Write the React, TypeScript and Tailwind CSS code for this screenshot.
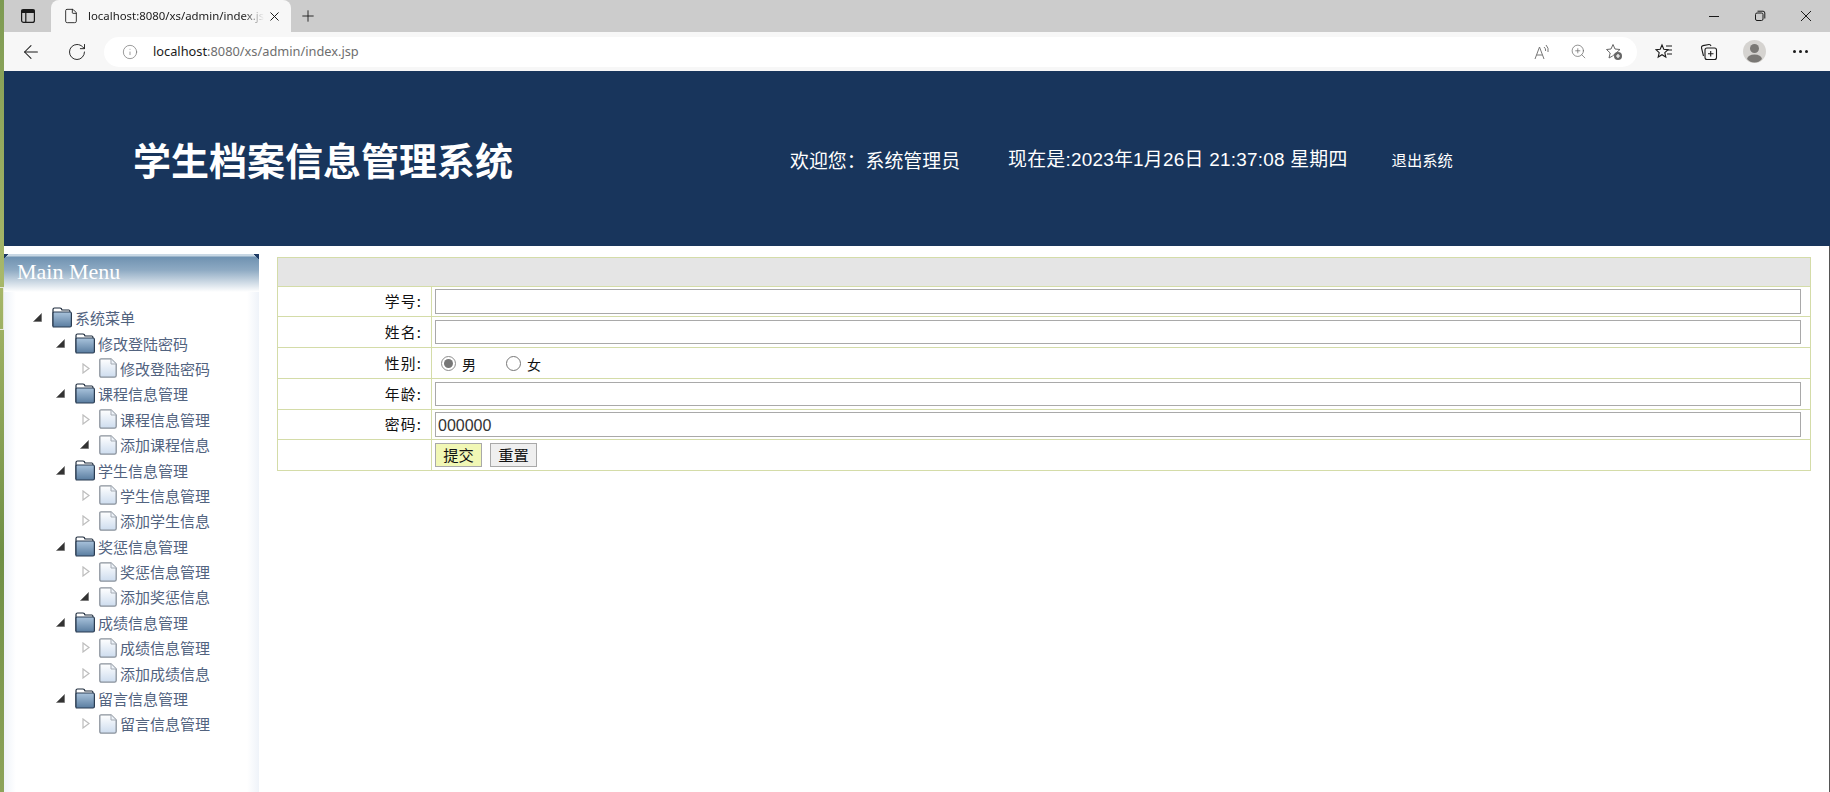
import { ArrowLeft, File, Info, Plus, RotateCw, X, ZoomIn } from "lucide-react";

type TreeRow = { level: 0 | 1 | 2; label: string; dark?: boolean };

const treeRows: TreeRow[] = [
    { level: 0, label: "系统菜单" },
    { level: 1, label: "修改登陆密码" },
    { level: 2, label: "修改登陆密码" },
    { level: 1, label: "课程信息管理" },
    { level: 2, label: "课程信息管理" },
    { level: 2, label: "添加课程信息", dark: true },
    { level: 1, label: "学生信息管理" },
    { level: 2, label: "学生信息管理" },
    { level: 2, label: "添加学生信息" },
    { level: 1, label: "奖惩信息管理" },
    { level: 2, label: "奖惩信息管理" },
    { level: 2, label: "添加奖惩信息", dark: true },
    { level: 1, label: "成绩信息管理" },
    { level: 2, label: "成绩信息管理" },
    { level: 2, label: "添加成绩信息" },
    { level: 1, label: "留言信息管理" },
    { level: 2, label: "留言信息管理" },
];

const levelPadding = ["pl-[25px]", "pl-[48px]", "pl-[72px]"];

function ExpandedArrow() {
    return (
        <svg width="9" height="9" viewBox="0 0 9 9" className="shrink-0">
            <path d="M8.5 0.5 V8.5 H0.5 Z" fill="#333" stroke="#666" strokeWidth="0.6" />
        </svg>
    );
}

function CollapsedArrow() {
    return (
        <svg width="8" height="11" viewBox="0 0 8 11" className="ml-[2px] shrink-0">
            <path d="M1 1 L7 5.5 L1 10 Z" fill="#fff" stroke="#bdbdbd" strokeWidth="1.2" />
        </svg>
    );
}

function FolderIcon() {
    return (
        <svg width="20" height="21" viewBox="0 0 20 21" className="shrink-0">
            <defs>
                <linearGradient id="folderBody" x1="0" y1="0" x2="0" y2="1">
                    <stop offset="0" stopColor="#a9c3dc" />
                    <stop offset="1" stopColor="#5a7da0" />
                </linearGradient>
            </defs>
            <path d="M1 19 V2.5 Q1 1 2.5 1 H8 Q9.5 1 10 3 H17 Q18 3 18 5" fill="#fff" stroke="#1d2b3c" strokeWidth="1.2" />
            <path d="M1 19.5 V6 Q1 5 2 5 H18 Q19.4 5 19.4 6.5 V18.5 Q19.4 20 18 20 H2 Q1 20 1 19.5 Z" fill="url(#folderBody)" stroke="#2a3c52" strokeWidth="1.2" />
        </svg>
    );
}

function FileIcon() {
    return (
        <svg width="18" height="20" viewBox="0 0 18 20" className="shrink-0">
            <defs>
                <linearGradient id="fileBody" x1="0" y1="0" x2="0" y2="1">
                    <stop offset="0" stopColor="#ffffff" />
                    <stop offset="1" stopColor="#cddcee" />
                </linearGradient>
            </defs>
            <path d="M2 0.8 H12 L17.2 6 V17.5 Q17.2 19.2 15.5 19.2 H2.5 Q0.8 19.2 0.8 17.5 V2 Q0.8 0.8 2 0.8 Z" fill="url(#fileBody)" stroke="#8a929c" strokeWidth="1.3" />
            <path d="M12 1 V6 H17" fill="#eef3f9" stroke="#a4abb4" strokeWidth="1" />
        </svg>
    );
}

function MenuTree() {
    return (
        <div className="pt-[13px]">
            {treeRows.map((row, i) => (
                <div key={i} className={`flex h-[25.4px] items-center ${levelPadding[row.level]}`}>
                    <span className="flex w-[23px] shrink-0 items-center justify-start pl-[4px]">
                        {row.level === 2 && !row.dark ? <CollapsedArrow /> : <ExpandedArrow />}
                    </span>
                    {row.level === 2 ? <FileIcon /> : <FolderIcon />}
                    <span className="ml-[3px] whitespace-nowrap text-[15px] leading-none text-[#52637f]">{row.label}</span>
                </div>
            ))}
        </div>
    );
}

function Sidebar() {
    return (
        <aside className="relative h-full w-[255px] shrink-0 bg-[linear-gradient(90deg,#eff3f9,#ffffff_12px,#ffffff_calc(100%-12px),#eff3f9)]">
            <div className="h-[38px] bg-[linear-gradient(180deg,#c9d8e4_0px,#c9d8e4_2px,#6f92b1_3px,#8eaac3_16px,#ffffff_100%)] pl-[13px] pt-[5px] font-['Liberation_Serif',serif] text-[22px] leading-[26px] text-white">
                Main Menu
            </div>
            <span className="absolute left-0 top-0 h-[4px] w-[5px] bg-[linear-gradient(135deg,#1d3a63_50%,transparent_50%)]" />
            <span className="absolute right-0 top-0 h-[5px] w-[6px] bg-[linear-gradient(225deg,#1d3a63_50%,transparent_50%)]" />
            <MenuTree />
        </aside>
    );
}

function FormLabel({ children }: { children: string }) {
    return <td className="w-[154px] border border-[#d4dca8] pr-[9px] text-right text-[14.8px] tracking-[1.2px]">{children}</td>;
}

function TextField({ value }: { value?: string }) {
    return (
        <input
            readOnly
            value={value ?? ""}
            className="block h-full w-full border border-[#a9a9a9] bg-white px-[2px] pt-[2px] font-['Liberation_Sans',sans-serif] text-[16px] text-[#333] outline-none"
        />
    );
}

function Radio({ checked }: { checked?: boolean }) {
    return (
        <span className={`flex h-[15px] w-[15px] items-center justify-center rounded-full border bg-white ${checked ? "border-[#8c8c8c]" : "border-[#777]"}`}>
            {checked && <span className="h-[9px] w-[9px] rounded-full bg-[#777]" />}
        </span>
    );
}

function StudentForm() {
    const inputRows = [
        { label: "学号:", height: "h-[30px]", field: "h-[25px]" },
        { label: "姓名:", height: "h-[31px]", field: "h-[24px]" },
    ];
    return (
        <table className="w-[1534px] border-collapse font-['Noto_Sans_CJK_SC',sans-serif] text-[14px] text-[#111]">
            <tbody>
                <tr className="h-[29px]">
                    <td colSpan={2} className="border border-[#d4dca8] bg-[#e5e5e5]" />
                </tr>
                {inputRows.map((row) => (
                    <tr key={row.label} className={row.height}>
                        <FormLabel>{row.label}</FormLabel>
                        <td className="border border-[#d4dca8] pl-[3px] pr-[9px]">
                            <div className={row.field}><TextField /></div>
                        </td>
                    </tr>
                ))}
                <tr className="h-[31px]">
                    <FormLabel>性别:</FormLabel>
                    <td className="border border-[#d4dca8] pl-[9px]">
                        <div className="flex items-center">
                            <Radio checked />
                            <span className="ml-[6px] mt-[3px] w-[44px]">男</span>
                            <Radio />
                            <span className="ml-[6px] mt-[3px]">女</span>
                        </div>
                    </td>
                </tr>
                <tr className="h-[31px]">
                    <FormLabel>年龄:</FormLabel>
                    <td className="border border-[#d4dca8] pl-[3px] pr-[9px]">
                        <div className="h-[24px]"><TextField /></div>
                    </td>
                </tr>
                <tr className="h-[30px]">
                    <FormLabel>密码:</FormLabel>
                    <td className="border border-[#d4dca8] pl-[3px] pr-[9px]">
                        <div className="h-[25px]"><TextField value="000000" /></div>
                    </td>
                </tr>
                <tr className="h-[31px]">
                    <td className="border border-[#d4dca8]" />
                    <td className="border border-[#d4dca8] pl-[3px]">
                        <div className="flex gap-[8px]">
                            <button type="button" className="h-[24px] w-[47px] border border-[#a9a9a9] bg-[#f1f7b5] text-[15.3px] leading-none text-[#111]">提交</button>
                            <button type="button" className="h-[24px] w-[47px] border border-[#a9a9a9] bg-[#efefef] text-[15.3px] leading-none text-[#111]">重置</button>
                        </div>
                    </td>
                </tr>
            </tbody>
        </table>
    );
}

function BrowserChrome() {
    return (
        <div className="shrink-0 font-['Noto_Sans',sans-serif] text-[#1a1a1a]">
            {/* tab strip */}
            <div className="flex h-[32px] items-end bg-[#cccccc]">
                <div className="flex h-[32px] w-[47px] items-center justify-center">
                    <svg width="16" height="16" viewBox="0 0 16 16" fill="none" stroke="#1a1a1a" strokeWidth="1.2">
                        <rect x="1.6" y="1.6" width="12.8" height="12.8" rx="2" />
                        <path d="M2 4.5 H14 V2 H2 Z" fill="#1a1a1a" />
                        <path d="M5.8 4.5 V14" />
                    </svg>
                </div>
                <div className="flex h-[32px] w-[240px] items-center rounded-t-[8px] bg-[#f7f7f7] pl-[12px]">
                    <File size={16} strokeWidth={1.3} className="shrink-0" />
                    <span className="ml-[9px] w-[176px] overflow-hidden whitespace-nowrap text-[11.4px] [mask-image:linear-gradient(90deg,#000_88%,transparent)]">localhost:8080/xs/admin/index.jsp</span>
                    <X size={15} strokeWidth={1.6} className="ml-[3px] shrink-0" />
                </div>
                <div className="flex h-[32px] w-[34px] items-center justify-center">
                    <Plus size={18} strokeWidth={1.2} />
                </div>
                <div className="ml-auto flex h-[32px] items-center pr-[1px]">
                    <div className="flex w-[46px] justify-center">
                        <svg width="12" height="12" viewBox="0 0 12 12" stroke="#1a1a1a" strokeWidth="1"><path d="M1 6.5 H11" /></svg>
                    </div>
                    <div className="flex w-[46px] justify-center">
                        <svg width="12" height="12" viewBox="0 0 12 12" fill="none" stroke="#1a1a1a" strokeWidth="1"><rect x="1.5" y="3" width="7.5" height="7.5" rx="1.5" /><path d="M3.5 1.2 H9 Q10.8 1.2 10.8 3 V8.5" /></svg>
                    </div>
                    <div className="flex w-[46px] justify-center">
                        <svg width="12" height="12" viewBox="0 0 12 12" stroke="#1a1a1a" strokeWidth="1"><path d="M1 1 L11 11 M11 1 L1 11" /></svg>
                    </div>
                </div>
            </div>
            {/* toolbar */}
            <div className="flex h-[39px] items-center bg-[#f7f7f7]">
                <div className="flex w-[54px] justify-center">
                    <ArrowLeft size={22} strokeWidth={1.1} />
                </div>
                <div className="flex w-[37px] justify-center">
                    <RotateCw size={20} strokeWidth={1.1} />
                </div>
                <div className="ml-[9px] flex h-[30px] w-[1533px] items-center rounded-full bg-white pl-[18px]">
                    <Info size={16} strokeWidth={1.1} className="text-[#777]" />
                    <span className="ml-[15px] whitespace-nowrap text-[12.8px]">
                        localhost<span className="text-[#6e6e6e]">:8080/xs/admin/index.jsp</span>
                    </span>
                    <div className="ml-auto flex items-center pr-[5px] text-[#666]">
                        <span className="relative flex w-[36px] justify-center">
                            <svg width="16" height="16" viewBox="0 0 16 16" fill="none" stroke="#777" strokeWidth="1"><path d="M1 15 L5.5 3 L10 15 M2.6 11 H8.4" /><path d="M10 3 Q12 4.5 11.6 7 M12 1 Q15 4 14 8" /></svg>
                        </span>
                        <span className="flex w-[36px] justify-center">
                            <ZoomIn size={17} strokeWidth={1} />
                        </span>
                        <span className="flex w-[36px] justify-center">
                            <svg width="18" height="18" viewBox="0 0 18 18" fill="none" stroke="#666" strokeWidth="1"><path d="M8 1.5 L10 6 L15 6.5 L11.3 9.8 L7.5 13 L4 15 L5.2 10 L1.5 6.5 L6 6 Z" /><circle cx="13" cy="13" r="4" fill="#666" stroke="none" /><path d="M13 11 V15 M11 13 H15" stroke="#fff" strokeWidth="1.2" /></svg>
                        </span>
                    </div>
                </div>
                <div className="ml-[4px] flex items-center">
                    <span className="flex w-[46px] justify-center">
                        <svg width="18" height="18" viewBox="0 0 18 18" fill="none" stroke="#1a1a1a" strokeWidth="1.1"><path d="M7 2 L8.8 6.2 L13 6.6 L9.8 9.6 L10.8 14 L7 11.7 L3.2 14 L4.2 9.6 L1 6.6 L5.2 6.2 Z" /><path d="M11 3 H17 M12 7 H17 M12 11 H17" /></svg>
                    </span>
                    <span className="flex w-[44px] justify-center">
                        <svg width="18" height="18" viewBox="0 0 18 18" fill="none" stroke="#1a1a1a" strokeWidth="1.1"><path d="M3.5 13 L1.5 5 Q1.2 3 3 2.6 L9 1.5 Q10.5 1.4 11 3" /><rect x="5" y="5" width="11.5" height="11.5" rx="2" /><path d="M10.7 8 V13.5 M8 10.7 H13.5" /></svg>
                    </span>
                    <span className="flex w-[46px] justify-center">
                        <svg width="23" height="23" viewBox="0 0 23 23"><circle cx="11.5" cy="11.5" r="11.5" fill="#d5d3d0" /><circle cx="11.5" cy="8.5" r="4.5" fill="#7a7875" /><path d="M4 19 Q5 14.5 11.5 14.5 Q18 14.5 19 19 Q16 22.5 11.5 22.5 Q7 22.5 4 19 Z" fill="#7a7875" /></svg>
                    </span>
                    <span className="flex w-[46px] justify-center gap-[3px]">
                        <span className="h-[3px] w-[3px] rounded-full bg-[#1a1a1a]" />
                        <span className="h-[3px] w-[3px] rounded-full bg-[#1a1a1a]" />
                        <span className="h-[3px] w-[3px] rounded-full bg-[#1a1a1a]" />
                    </span>
                </div>
            </div>
        </div>
    );
}

function PageHeader() {
    return (
        <header className="flex h-[175px] shrink-0 items-center bg-[#18355c] pl-[129px] font-['Noto_Sans_CJK_SC',sans-serif] text-white">
            <h1 className="mt-[1px] w-[657px] shrink-0 whitespace-nowrap text-[38px] font-bold leading-none">学生档案信息管理系统</h1>
            <span className="mt-[3px] text-[18.9px] leading-none">欢迎您：系统管理员</span>
            <span className="ml-[48px] mt-[3px] font-['Liberation_Sans','Noto_Sans_CJK_SC',sans-serif] text-[18.9px] leading-none tracking-[0.25px]">现在是:2023年1月26日 21:37:08 星期四</span>
            <span className="ml-[44px] mt-[2px] text-[15.3px] leading-none">退出系统</span>
        </header>
    );
}

export default function App() {
    return (
        <div className="flex h-[792px] w-[1830px] overflow-hidden bg-white font-['Noto_Sans_CJK_SC',sans-serif]">
            {/* desktop wallpaper showing at the window edge */}
            <div className="flex w-[4px] shrink-0 flex-col bg-[linear-gradient(180deg,#7d9a52,#a8b86a_35%,#6f8f45_70%,#8da35a)]">
                <div className="h-[287px]" />
                <div className="h-[43px] border border-l-0 border-[#e8e8d8]" />
            </div>
            <div className="flex min-w-0 flex-1 flex-col">
                <BrowserChrome />
                <PageHeader />
                <div className="flex min-h-0 flex-1 border-r border-[#555]">
                    <div className="h-full pt-[8px]">
                        <Sidebar />
                    </div>
                    <div className="ml-[18px] pt-[11px]">
                        <StudentForm />
                    </div>
                </div>
            </div>
        </div>
    );
}
